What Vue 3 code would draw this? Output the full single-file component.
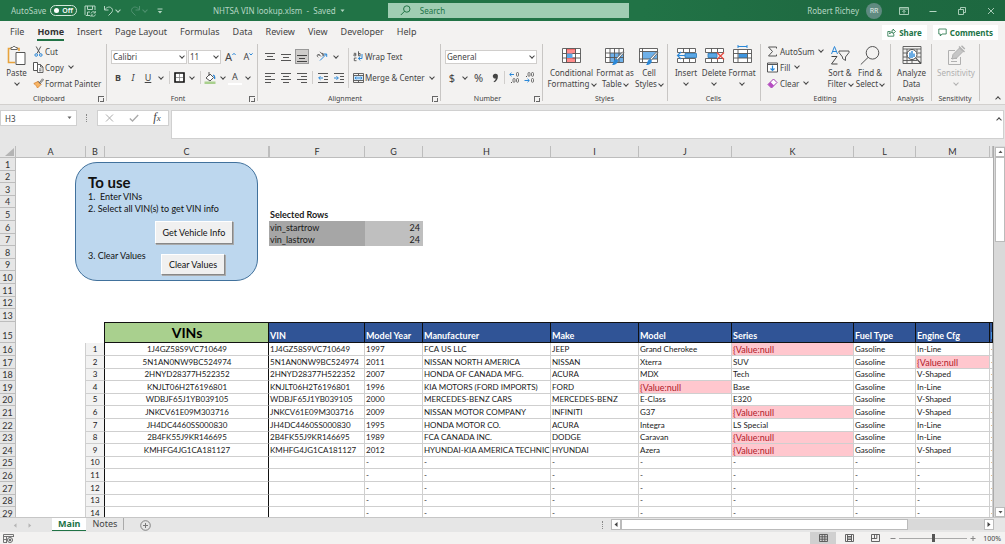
<script setup>
import { ref } from 'vue';

const tabs = ['File', 'Home', 'Insert', 'Page Layout', 'Formulas', 'Data', 'Review', 'View', 'Developer', 'Help'];
const activeTab = ref('Home');
const autoSave = ref(false);
const search = ref('');
const cellName = ref('H3');
const formula = ref('');
const fontName = ref('Calibri');
const fontSize = ref('11');
const numberFormat = ref('General');
const zoom = ref(100);
const sheet = ref('Main');

const columns = ['A', 'B', 'C', 'F', 'G', 'H', 'I', 'J', 'K', 'L', 'M', ''];
const fields = ['VIN', 'Model Year', 'Manufacturer', 'Make', 'Model', 'Series', 'Fuel Type', 'Engine Cfg', 'I'];
const NULL = '{Value:null';

const topRows = Array.from({ length: 13 }, (_, i) => i + 1);
const selected = {
    5: ['Selected Rows', ''],
    6: ['vin_startrow', '24'],
    7: ['vin_lastrow', '24'],
};

const vehicles = [
    ['1J4GZ58S9VC710649', '1997', 'FCA US LLC', 'JEEP', 'Grand Cherokee', NULL, 'Gasoline', 'In-Line', '-'],
    ['5N1AN0NW9BC524974', '2011', 'NISSAN NORTH AMERICA', 'NISSAN', 'Xterra', 'SUV', 'Gasoline', NULL, '-'],
    ['2HNYD28377H522352', '2007', 'HONDA OF CANADA MFG.', 'ACURA', 'MDX', 'Tech', 'Gasoline', 'V-Shaped', '-'],
    ['KNJLT06H2T6196801', '1996', 'KIA MOTORS (FORD IMPORTS)', 'FORD', NULL, 'Base', 'Gasoline', 'In-Line', '-'],
    ['WDBJF65J1YB039105', '2000', 'MERCEDES-BENZ CARS', 'MERCEDES-BENZ', 'E-Class', 'E320', 'Gasoline', 'V-Shaped', '-'],
    ['JNKCV61E09M303716', '2009', 'NISSAN MOTOR COMPANY', 'INFINITI', 'G37', NULL, 'Gasoline', 'V-Shaped', '-'],
    ['JH4DC4460SS000830', '1995', 'HONDA MOTOR CO.', 'ACURA', 'Integra', 'LS Special', 'Gasoline', 'In-Line', '-'],
    ['2B4FK55J9KR146695', '1989', 'FCA CANADA INC.', 'DODGE', 'Caravan', NULL, 'Gasoline', 'In-Line', '-'],
    ['KMHFG4JG1CA181127', '2012', 'HYUNDAI-KIA AMERICA TECHNIC', 'HYUNDAI', 'Azera', NULL, 'Gasoline', 'V-Shaped', '-'],
];
const emptyRow = ['', '-', '-', '-', '-', '-', '-', '-', '-'];
const dataRows = Array.from({ length: 14 }, (_, i) => vehicles[i] || emptyRow);
</script>

<template>
    <div class="excel">
        <header class="title-bar">
            <div class="title-left">
                <label class="autosave">
                    <span>AutoSave</span>
                    <input type="checkbox" class="sr" v-model="autoSave">
                    <span class="switch"><i></i><b>{{ autoSave ? 'On' : 'Off' }}</b></span>
                </label>
                <button class="quick" aria-label="Save">
                    <svg width="12" height="12" viewBox="0 0 12 12" fill="none" stroke="currentColor">
                        <path d="M6 10.500H2L1 9.500V1h10v4M3.500 1v3.500h5V1M3.500 10.500V7H6" />
                        <path d="M7 8.500a2.300 2.300 0 0 1 4-1M11.300 6v2H9.500M11.500 9.500a2.300 2.300 0 0 1-4 1M7 12v-2h2" stroke-width=".9" />
                    </svg>
                </button>
                <button class="quick" aria-label="Undo">
                    <svg width="11" height="11" viewBox="0 0 11 11" fill="none" stroke="currentColor">
                        <path d="M1.500 1v4h4M1.500 5C4 1.500 7 1.500 8.500 3s1.300 3.500-.5 5L5.500 10.500" />
                    </svg>
                    <i class="chev"></i>
                </button>
                <button class="quick dim" aria-label="Redo">
                    <svg width="11" height="11" viewBox="0 0 11 11" fill="none" stroke="currentColor">
                        <path d="M9.500 1v4h-4M9.500 5C7 1.500 4 1.500 2.500 3S1.200 6.500 3 8l2.500 2.500" />
                    </svg>
                    <i class="chev"></i>
                </button>
                <button class="quick" aria-label="Customize Quick Access Toolbar">
                    <svg width="6" height="6" viewBox="0 0 6 6"><path d="M.5 1h5" stroke="currentColor" /><path d="M.8 3h4.400L3 5.400z" fill="currentColor" /></svg>
                </button>
            </div>
            <button class="doc-name">NHTSA VIN lookup.xlsm &nbsp;-&nbsp; Saved &nbsp;<svg width="5" height="4" viewBox="0 0 5 4"><path d="M.5.5h4L2.500 3z" fill="currentColor" /></svg></button>
            <label class="search">
                <svg width="11" height="11" viewBox="0 0 11 11" fill="none" stroke="#217346"><circle cx="6.800" cy="4" r="3.200" /><path d="M4.500 6.300.8 10" /></svg>
                <input v-model="search" placeholder="Search" aria-label="Search">
            </label>
            <div class="title-right">
                <span>Robert Richey</span>
                <span class="avatar">RR</span>
                <button class="win" aria-label="Ribbon Display Options">
                    <svg width="10" height="8" viewBox="0 0 10 8" fill="none" stroke="currentColor"><path d="M.5.5h9v7h-9zM.5 2h9M5 6.500v-3M3.500 4.800 5 3.300l1.500 1.500" stroke-width=".9" /></svg>
                </button>
                <button class="win" aria-label="Minimize"><svg width="8" height="8" viewBox="0 0 8 8" stroke="currentColor"><path d="M.5 4.500h7" /></svg></button>
                <button class="win" aria-label="Restore"><svg width="8" height="8" viewBox="0 0 8 8" fill="none" stroke="currentColor"><path d="M.5 2.500h5v5h-5zM2.500 2.500v-2h5v5h-2" stroke-width=".9" /></svg></button>
                <button class="win" aria-label="Close"><svg width="8" height="8" viewBox="0 0 8 8" stroke="currentColor"><path d="M1 1l6 6M7 1 1 7" stroke-width=".9" /></svg></button>
            </div>
        </header>

        <nav class="tabs">
            <button v-for="tab in tabs" :key="tab" class="tab" :class="{ active: tab === activeTab }" @click="activeTab = tab">{{ tab }}</button>
            <span class="spacer"></span>
            <button class="action">
                <svg width="9" height="9" viewBox="0 0 9 9" fill="none" stroke="#217346"><path d="M3 3.500H.8v4.700h6V6M2.500 6c.2-2 1.500-3.200 3.500-3.200V1l2.500 2.500L6 5.800V4.300C4.500 4.300 3.300 4.800 2.500 6z" stroke-width=".8" /></svg>
                Share
            </button>
            <button class="action">
                <svg width="9" height="9" viewBox="0 0 9 9" fill="none" stroke="#217346"><path d="M.8 1h7.400v5H4L2.300 8V6H.8z" stroke-width=".8" /></svg>
                Comments
            </button>
        </nav>

        <section class="ribbon">
            <div class="group g-clipboard">
                <div class="body">
                    <button class="big paste">
                        <svg width="19" height="21" viewBox="0 0 19 21" fill="none">
                            <path d="M12 6V3.500H1.500v14H8" stroke="#e8a33d" stroke-width="1.600" />
                            <path d="M4 4.500V2.500h1.500a1.700 1.700 0 0 1 3.200 0h1.500v2z" fill="#fff" stroke="#666" />
                            <path d="M9 7.500h9v12H9z" fill="#fff" stroke="#555" />
                        </svg>
                        <span>Paste</span><i class="chev"></i>
                    </button>
                    <div class="stack">
                        <button>
                            <svg width="11" height="11" viewBox="0 0 11 11" fill="none"><path d="M3.200.5 7 7.500M7.800.5 4 7.500" stroke="#555" /><circle cx="3.200" cy="9" r="1.300" stroke="#2b88d8" /><circle cx="7.800" cy="9" r="1.300" stroke="#2b88d8" /></svg>
                            Cut
                        </button>
                        <button>
                            <svg width="11" height="11" viewBox="0 0 11 11" fill="#fff" stroke="#555"><path d="M.5.5h4v8h-4z" /><path d="M4.500 2.500h3l2.500 2.500v5.500H4.500zM7.500 2.500V5H10M6 7h2.500M6 8.800h2.500" stroke-width=".9" /></svg>
                            Copy <i class="chev far"></i>
                        </button>
                        <button>
                            <svg width="11" height="11" viewBox="0 0 11 11"><path d="M.8 5.500 5 3.500l3 3L4.500 10C3.500 8 2.500 6.500.8 5.500z" fill="#f7b565" stroke="#d9822b" stroke-width=".8" /><path d="M5 3.200 8 6.200M6.500 4.500 9.500.8l1 1L7.300 5.300" fill="#fff" stroke="#555" stroke-width=".9" /></svg>
                            Format Painter
                        </button>
                    </div>
                </div>
                <footer><span>Clipboard</span><i class="launcher"></i></footer>
            </div>

            <div class="group g-font">
                <div class="body rows">
                    <div class="row">
                        <span class="combo c-font"><select v-model="fontName" aria-label="Font"><option>Calibri</option></select><i class="chev"></i></span>
                        <span class="combo c-size"><select v-model="fontSize" aria-label="Font size"><option>11</option></select><i class="chev"></i></span>
                        <button class="tool wide" aria-label="Increase Font Size"><span class="glyph">A</span><svg width="4" height="10" viewBox="0 0 4 10" fill="none" stroke="#2b88d8"><path d="M.4 3 2 1.300 3.600 3" /></svg></button>
                        <button class="tool wide" aria-label="Decrease Font Size"><span class="glyph small">A</span><svg width="4" height="10" viewBox="0 0 4 10" fill="none" stroke="#2b88d8"><path d="M.4 1.300 2 3l1.600-1.700" /></svg></button>
                    </div>
                    <div class="row">
                        <button class="tool" aria-label="Bold"><b>B</b></button>
                        <button class="tool" aria-label="Italic"><em>I</em></button>
                        <button class="tool" aria-label="Underline"><u>U</u></button>
                        <i class="chev"></i>
                        <span class="sep"></span>
                        <button class="tool" aria-label="Borders"><svg width="11" height="11" viewBox="0 0 11 11" fill="#fff"><path d="M1 1h9v9H1z" stroke="#111" stroke-width="1.600" /><path d="M5.500 2v7M2 5.500h7" stroke="#888" stroke-width=".8" /></svg></button>
                        <i class="chev"></i>
                        <span class="sep"></span>
                        <button class="tool" aria-label="Fill Color"><svg width="12" height="12" viewBox="0 0 12 12" fill="none"><path d="M2 6l4-4 3.500 3.500L6 9z" fill="#fff" stroke="#555" /><path d="M5 0v4" stroke="#555" /><path d="M9 3c1.500.5 2 2 1.500 4" stroke="#2b88d8" stroke-width="1.300" /><path d="M.5 9.500h11V12H.5z" fill="#a9d08e" /></svg></button>
                        <i class="chev"></i>
                        <button class="tool font-color" aria-label="Font Color">A</button>
                        <i class="chev"></i>
                    </div>
                </div>
                <footer><span>Font</span><i class="launcher"></i></footer>
            </div>

            <div class="group g-align">
                <div class="body">
                    <div class="rows">
                        <div class="row">
                            <button class="tool" aria-label="Top Align"><svg width="10" height="10" viewBox="0 0 10 10" stroke="#555"><path d="M0 1.500h10M2 4.500h6M0 7.500h10" /></svg></button>
                            <button class="tool" aria-label="Middle Align"><svg width="10" height="10" viewBox="0 0 10 10" stroke="#555"><path d="M0 2.500h10M2 5.500h6M0 8.500h10" /></svg></button>
                            <button class="tool on" aria-label="Bottom Align"><svg width="10" height="10" viewBox="0 0 10 10" stroke="#444"><path d="M0 3.500h10M2 6.500h6M0 9.500h10" /></svg></button>
                            <button class="tool orient" aria-label="Orientation"><svg width="12" height="11" viewBox="0 0 12 11" fill="none"><path d="M4 9.500 10.500 3M7.800 3h2.900v2.900" stroke="#2b88d8" /><path d="M1 4.500 2.500 3 5 5.500M3.800 4.300a1.300 1.300 0 1 0-1.600 2M4 .8l3.500 3.500M5.800 2.600a1.200 1.200 0 1 1 .5 2.200" stroke="#555" stroke-width=".9" /></svg></button>
                            <i class="chev"></i>
                        </div>
                        <div class="row">
                            <button class="tool" aria-label="Align Left"><svg width="10" height="10" viewBox="0 0 10 10" stroke="#555"><path d="M0 .5h10M0 3.500h6M0 6.500h10M0 9.500h6" /></svg></button>
                            <button class="tool" aria-label="Center"><svg width="10" height="10" viewBox="0 0 10 10" stroke="#555"><path d="M0 .5h10M2 3.500h6M0 6.500h10M2 9.500h6" /></svg></button>
                            <button class="tool" aria-label="Align Right"><svg width="10" height="10" viewBox="0 0 10 10" stroke="#555"><path d="M0 .5h10M4 3.500h6M0 6.500h10M4 9.500h6" /></svg></button>
                            <span class="sep snug"></span>
                            <button class="tool" aria-label="Decrease Indent"><svg width="10" height="10" viewBox="0 0 10 10" fill="none"><path d="M0 .5h10M6 3.500h4M6 6.500h4M0 9.500h10" stroke="#555" /><path d="M5 5H.8M2.500 3.200.7 5l1.800 1.800" stroke="#2b88d8" /></svg></button>
                            <button class="tool" aria-label="Increase Indent"><svg width="10" height="10" viewBox="0 0 10 10" fill="none"><path d="M0 .5h10M6 3.500h4M6 6.500h4M0 9.500h10" stroke="#555" /><path d="M0 5h4.200M2.500 3.200 4.300 5 2.500 6.800" stroke="#2b88d8" /></svg></button>
                        </div>
                    </div>
                    <span class="tall-sep"></span>
                    <div class="rows">
                        <button class="row text-tool"><svg width="11" height="11" viewBox="0 0 11 11" fill="none"><path d="M.8 2.300h2v2.500H1.400a.7.700 0 0 1 0-1.400h1.400M5.500.3v4.500M5.500 2.500h1.600v2.300H5.500M3.500 7H1.300v2.700h2.200" stroke="#555" stroke-width=".9" /><path d="M9 3v4.500H5.500M7.300 5.600 5.300 7.500l2 1.900" stroke="#2b88d8" /></svg>Wrap Text</button>
                        <button class="row text-tool"><svg width="11" height="10" viewBox="0 0 11 10" fill="none"><path d="M.5.5h10v9H.5zM.5 2.500h10M.5 7.500h10M5.500.5v2M5.500 7.500v2" stroke="#555" stroke-width=".9" /><path d="M1 3h9v4H1z" fill="#cce4f7" /><path d="M2 5h7M3.300 3.700 2 5l1.300 1.300M7.700 3.700 9 5 7.700 6.300" stroke="#2b88d8" stroke-width=".9" /></svg>Merge &amp; Center <i class="chev far"></i></button>
                    </div>
                </div>
                <footer><span>Alignment</span><i class="launcher"></i></footer>
            </div>

            <div class="group g-number">
                <div class="body rows">
                    <div class="row"><span class="combo c-number"><select v-model="numberFormat" aria-label="Number Format"><option>General</option></select><i class="chev"></i></span></div>
                    <div class="row">
                        <button class="tool" aria-label="Accounting Number Format"><span class="glyph">$</span></button>
                        <i class="chev"></i>
                        <button class="tool wide" aria-label="Percent Style"><span class="glyph">%</span></button>
                        <button class="tool" aria-label="Comma Style"><svg width="7" height="10" viewBox="0 0 7 10"><path d="M3.500.8a2.400 2.400 0 0 1 2.400 2.600C5.900 6 4.500 8.300 2 9.200l-.4-.8C3 7.600 3.700 6.700 3.800 5.500A2.400 2.400 0 1 1 3.500.8z" fill="#444" /></svg></button>
                        <span class="sep snug"></span>
                        <button class="tool" aria-label="Increase Decimal"><svg width="11" height="11" viewBox="0 0 11 11" fill="none"><path d="M5 2.500H.8M2.500.8.7 2.500l1.800 1.700" stroke="#2b88d8" /><rect x="7.500" y=".5" width="2" height="3.800" rx="1" stroke="#555" stroke-width=".8" /><rect x="4" y="6.500" width="2" height="3.800" rx="1" stroke="#555" stroke-width=".8" /><rect x="7.500" y="6.500" width="2" height="3.800" rx="1" stroke="#555" stroke-width=".8" /><path d="M2 10.500h1" stroke="#555" /></svg></button>
                        <button class="tool" aria-label="Decrease Decimal"><svg width="11" height="11" viewBox="0 0 11 11" fill="none"><path d="M.5 8.500h4.700M3.500 6.800l1.800 1.700-1.800 1.700" stroke="#2b88d8" /><rect x="4" y=".5" width="2" height="3.800" rx="1" stroke="#555" stroke-width=".8" /><rect x="7.500" y=".5" width="2" height="3.800" rx="1" stroke="#555" stroke-width=".8" /><rect x="7.500" y="6.500" width="2" height="3.800" rx="1" stroke="#555" stroke-width=".8" /><path d="M2 4.500h1" stroke="#555" /></svg></button>
                    </div>
                </div>
                <footer><span>Number</span><i class="launcher"></i></footer>
            </div>

            <div class="group g-styles">
                <div class="body">
                    <button class="big w-cond">
                        <svg width="19" height="21" viewBox="0 0 19 21" fill="none">
                            <path d="M.5 3.500h18v14H.5z" fill="#fff" />
                            <path d="M4.500 4h9v4.500h-9zM4.500 13h9v4.500h-9z" fill="#ff8c8c" stroke="#e03c3c" stroke-width=".8" />
                            <path d="M4.500 8.500h6V13h-6z" fill="#5aa7e6" />
                            <path d="M.5 3.500h18v14H.5zM.5 8.500h4M.5 13h4M10.500 8.500h8M10.500 13h8M4.500 3.500v14M13.500 3.500v14" stroke="#555" stroke-width=".9" />
                        </svg>
                        <span>Conditional</span><span>Formatting <i class="chev"></i></span>
                    </button>
                    <button class="big w-table">
                        <svg width="20" height="21" viewBox="0 0 20 21" fill="none">
                            <path d="M.5 3.500h18v14H.5z" fill="#fff" />
                            <path d="M5 8h13.500v9.500H5z" fill="#6fb1ea" />
                            <path d="M.5 3.500h18v14H.5zM.5 8h18M.5 12.500h18M5 3.500v14M9.500 3.500v14M14 3.500v14" stroke="#555" stroke-width=".9" />
                            <path d="M19 7.500 12.500 15l-1.500-1.200L17.500 7z" fill="#fff" stroke="#555" stroke-width=".8" />
                            <path d="M11 14l1.800 1.500c0 2.500-1.800 4.500-5.800 4.500 1.500-1 1-5 4-6z" fill="#2b88d8" />
                        </svg>
                        <span>Format as</span><span>Table <i class="chev"></i></span>
                    </button>
                    <button class="big w-cell">
                        <svg width="20" height="21" viewBox="0 0 20 21" fill="none">
                            <path d="M.5 3.500h18v14H.5z" fill="#fff" />
                            <path d="M3.500 6.500h15V14h-15z" fill="#6fb1ea" />
                            <path d="M.5 3.500h18v14H.5zM.5 6.500h18M.5 14h18M3.500 3.500v14" stroke="#555" stroke-width=".9" />
                            <path d="M19 7.500 12.500 15l-1.500-1.200L17.500 7z" fill="#fff" stroke="#555" stroke-width=".8" />
                            <path d="M11 14l1.800 1.500c0 2.500-1.800 4.500-5.800 4.500 1.500-1 1-5 4-6z" fill="#2b88d8" />
                        </svg>
                        <span>Cell</span><span>Styles <i class="chev"></i></span>
                    </button>
                </div>
                <footer><span>Styles</span></footer>
            </div>

            <div class="group g-cells">
                <div class="body">
                    <button class="big w-cells">
                        <svg width="21" height="21" viewBox="0 0 21 21" fill="none">
                            <path d="M1.500 3.500h18v4h-18zM1.500 13.500h18v4h-18zM7.500 3.500v4M13.500 3.500v4M7.500 13.500v4M13.500 13.500v4" fill="#fff" stroke="#555" stroke-width=".9" />
                            <path d="M9 8.500h11.500v4H9z" fill="#5aa7e6" stroke="#2b78b8" stroke-width=".8" />
                            <path d="M9 10.500H1.500M5 7l-3.500 3.500L5 14" stroke="#2b88d8" stroke-width="1.200" />
                        </svg>
                        <span>Insert</span><i class="chev"></i>
                    </button>
                    <button class="big w-cells">
                        <svg width="21" height="21" viewBox="0 0 21 21" fill="none">
                            <path d="M1.500 3.500h18v4h-18zM1.500 13.500h18v4h-18zM7.500 3.500v4M13.500 3.500v4M7.500 13.500v4M13.500 13.500v4" fill="#fff" stroke="#555" stroke-width=".9" />
                            <path d="M4 8.500h9v4H4z" fill="#5aa7e6" stroke="#2b78b8" stroke-width=".8" />
                            <path d="M13 7.500l7 7M20 7.500l-7 7" stroke="#e8483f" stroke-width="1.200" />
                        </svg>
                        <span>Delete</span><i class="chev"></i>
                    </button>
                    <button class="big w-cells">
                        <svg width="21" height="21" viewBox="0 0 21 21" fill="none">
                            <path d="M1.500 4.500h18v13h-18z" fill="#fff" />
                            <path d="M6.500 8.500h9V13h-9z" fill="#3d95e0" />
                            <path d="M1.500 4.500h18v13h-18zM1.500 8.500h18M1.500 13h18M6 4.500v13M15.500 4.500v13" stroke="#555" stroke-width=".9" />
                            <path d="M6 1.500h9M6 0v3M15 0v3" stroke="#2b88d8" />
                        </svg>
                        <span>Format</span><i class="chev"></i>
                    </button>
                </div>
                <footer><span>Cells</span></footer>
            </div>

            <div class="group g-editing">
                <div class="body">
                    <div class="stack edit">
                        <button><svg width="11" height="11" viewBox="0 0 11 11" fill="none" stroke="#555"><path d="M9.500 2.500V1h-8l4 4.500-4 4.500h8V8.500" /></svg>AutoSum <i class="chev"></i></button>
                        <button><svg width="11" height="11" viewBox="0 0 11 11" fill="none"><path d="M.5 1h10v9H.5z" fill="#fff" stroke="#555" /><path d="M.5 2.500h10" stroke="#555" /><path d="M5.500 3.500v5M3.500 6.500l2 2 2-2" stroke="#2b88d8" stroke-width="1.200" /></svg>Fill <i class="chev"></i></button>
                        <button><svg width="11" height="11" viewBox="0 0 11 11" fill="none"><path d="M1 6.500 6.500 1 10 4.500 4.500 10z" fill="#fff" stroke="#a33db0" /><path d="M1 6.500l2.500-2.500L7 7.500 4.500 10z" fill="#b54bc2" /></svg>Clear <i class="chev"></i></button>
                    </div>
                    <button class="big w-edit">
                        <svg width="20" height="21" viewBox="0 0 20 21" fill="none">
                            <path d="M1.500 9 4.500 1.500 7.500 9M2.600 6.500h3.800" stroke="#2b88d8" />
                            <path d="M1.500 11.500h5.500L1.500 19h6" stroke="#444" />
                            <path d="M9 6h10v1.500L15.500 12v3.500l-3-2V12L9 7.500z" stroke="#555" />
                        </svg>
                        <span>Sort &amp;</span><span>Filter <i class="chev"></i></span>
                    </button>
                    <button class="big w-edit">
                        <svg width="20" height="21" viewBox="0 0 20 21" fill="none" stroke="#555"><circle cx="12.500" cy="7.800" r="6.300" /><path d="M8 12.500.8 19.500" /></svg>
                        <span>Find &amp;</span><span>Select <i class="chev"></i></span>
                    </button>
                </div>
                <footer><span>Editing</span></footer>
            </div>

            <div class="group g-analysis">
                <div class="body">
                    <button class="big">
                        <svg width="20" height="21" viewBox="0 0 20 21" fill="none">
                            <path d="M1 1.500h18v17H1zM1 4h18M1 8h4M15 8h4M1 12h4M15 12h4M1 15.500h14M5 4v14M10 15v3.500M15 4v3" stroke="#555" stroke-width=".9" />
                            <circle cx="10" cy="9.500" r="5" fill="#fff" stroke="#444" />
                            <path d="M8 7.500V13M10 6v7M12 8.500V12" stroke="#2b88d8" stroke-width="1.400" />
                            <path d="M13.800 13.200 19 18.500" stroke="#444" stroke-width="1.200" />
                        </svg>
                        <span>Analyze</span><span>Data</span>
                    </button>
                </div>
                <footer><span>Analysis</span></footer>
            </div>

            <div class="group g-sens">
                <div class="body">
                    <button class="big" disabled>
                        <svg width="20" height="21" viewBox="0 0 20 21" fill="none" stroke="#b0b0b0">
                            <path d="M9 5.500H2.500v14h12V12M5 13.500h6M5 16.500h6" />
                            <path d="M7 9.500 13.500 3l3.500 3.500L10.500 13 6 14z" fill="#c6c6c6" />
                            <path d="M13 1.500 18.500 7M15.500.8l3.300 3.300" stroke-width="1.400" />
                        </svg>
                        <span>Sensitivity</span><i class="chev"></i>
                    </button>
                </div>
                <footer><span>Sensitivity</span></footer>
            </div>
            <button class="collapse" aria-label="Collapse the Ribbon"><i class="chev up"></i></button>
        </section>

        <section class="formula-bar">
            <span class="name-box">
                <input v-model="cellName" aria-label="Name Box">
                <svg width="5" height="4" viewBox="0 0 5 4"><path d="M.5.5h4L2.500 3z" fill="#666" /></svg>
            </span>
            <span class="dots"></span>
            <div class="fx">
                <button aria-label="Cancel"><svg width="9" height="8" viewBox="0 0 9 8" stroke="#aaa"><path d="M1 .5l7 7M8 .5l-7 7" /></svg></button>
                <button aria-label="Enter"><svg width="10" height="8" viewBox="0 0 10 8" fill="none" stroke="#aaa" stroke-width="1.300"><path d="M.8 4.500 3.500 7 9.200 1" /></svg></button>
                <button class="fn" aria-label="Insert Function"><em>f<small>x</small></em></button>
            </div>
            <div class="formula">
                <input v-model="formula" aria-label="Formula Bar">
                <button aria-label="Collapse Formula Bar"><i class="chev up"></i></button>
            </div>
        </section>

        <main class="work">
            <div class="sheet">
                <table>
                    <colgroup>
                        <col class="k-head"><col class="k-a"><col class="k-b"><col class="k-c"><col class="k-f"><col class="k-g">
                        <col class="k-h"><col class="k-i"><col class="k-j"><col class="k-k"><col class="k-l"><col class="k-m"><col>
                    </colgroup>
                    <thead>
                        <tr>
                            <th class="corner"><svg width="9" height="8" viewBox="0 0 9 8"><path d="M9 0v8H0z" fill="#b4b4b4" /></svg></th>
                            <th v-for="(c, i) in columns" :key="i" :class="{ after: c === 'F' }">{{ c }}</th>
                        </tr>
                    </thead>
                    <tbody>
                        <tr v-for="n in topRows" :key="n">
                            <th>{{ n }}</th>
                            <td></td><td></td><td></td>
                            <template v-if="selected[n]">
                                <td :class="n === 5 ? 'strong' : 'gray'">{{ selected[n][0] }}</td>
                                <td :class="{ silver: n > 5 }">{{ selected[n][1] }}</td>
                            </template>
                            <template v-else><td></td><td></td></template>
                            <td v-for="i in 7" :key="i"></td>
                        </tr>
                        <tr class="fields">
                            <th>15</th>
                            <td></td><td class="before"></td>
                            <td class="vins">VINs</td>
                            <td v-for="f in fields" :key="f" class="field">{{ f }}</td>
                        </tr>
                        <tr v-for="(row, r) in dataRows" :key="r" class="data">
                            <th>{{ r + 16 }}</th>
                            <td class="blank"></td>
                            <td class="num">{{ r + 1 }}</td>
                            <td class="vin">{{ row[0] }}</td>
                            <td v-for="(v, i) in row" :key="i" :class="{ bad: v === NULL }">{{ v }}</td>
                        </tr>
                    </tbody>
                </table>

                <div class="card">
                    <h2>To use</h2>
                    <p>1.&nbsp; Enter VINs</p>
                    <p>2. Select all VIN(s) to get VIN info</p>
                    <button class="get">Get Vehicle Info</button>
                    <div class="clear-row">
                        <p>3. Clear Values</p>
                        <button class="clear">Clear Values</button>
                    </div>
                </div>
            </div>
            <div class="vscroll">
                <button aria-label="Scroll up"><svg width="5" height="4" viewBox="0 0 5 4"><path d="M.5 3h4L2.500.5z" fill="#555" /></svg></button>
                <span class="thumb"></span>
                <button class="end" aria-label="Scroll down"><svg width="5" height="4" viewBox="0 0 5 4"><path d="M.5 1h4L2.500 3.500z" fill="#555" /></svg></button>
            </div>
        </main>

        <div class="sheet-tabs">
            <div class="sheets">
                <button class="arrow" aria-label="Previous sheet"><svg width="4" height="5" viewBox="0 0 4 5"><path d="M3.500.3v4.400L.8 2.500z" fill="#b5b5b5" /></svg></button>
                <button class="arrow" aria-label="Next sheet"><svg width="4" height="5" viewBox="0 0 4 5"><path d="M.5.3v4.400l2.700-2.200z" fill="#b5b5b5" /></svg></button>
                <button v-for="s in ['Main', 'Notes']" :key="s" class="sheet-tab" :class="{ current: s === sheet }" @click="sheet = s">{{ s }}</button>
                <button class="add" aria-label="New sheet"><svg width="11" height="11" viewBox="0 0 11 11" fill="none" stroke="#777"><circle cx="5.500" cy="5.500" r="4.800" stroke-width=".9" /><path d="M5.500 3v5M3 5.500h5" /></svg></button>
            </div>
            <span class="dots"></span>
            <div class="hscroll">
                <button aria-label="Scroll left"><svg width="4" height="5" viewBox="0 0 4 5"><path d="M3.500 0v5L.5 2.500z" fill="#444" /></svg></button>
                <span class="thumb"></span>
                <button class="end" aria-label="Scroll right"><svg width="4" height="5" viewBox="0 0 4 5"><path d="M.5 0v5l3-2.500z" fill="#444" /></svg></button>
            </div>
        </div>

        <footer class="status">
            <button aria-label="Record Macro"><svg width="11" height="9" viewBox="0 0 11 9" fill="none" stroke="#666"><path d="M10.500 3V.5H.5v8H4M.5 2.500h10M3.500 2.500v6M.5 5.500h3" stroke-width=".9" /><circle cx="7" cy="6" r="2.500" fill="#fff" /><circle cx="7" cy="6" r=".9" fill="#444" /></svg></button>
            <span class="spacer"></span>
            <button class="view on" aria-label="Normal"><svg width="9" height="8" viewBox="0 0 9 8" fill="none" stroke="#555"><path d="M.5.5h8v7h-8zM.5 2.800h8M.5 5.200h8M3.200.5v7M5.800.5v7" stroke-width=".9" /></svg></button>
            <button class="view" aria-label="Page Layout"><svg width="9" height="8" viewBox="0 0 9 8" fill="none" stroke="#555"><path d="M.5.5h8v7h-8zM2.500 1v6M6.500 1v6M2.500 2.500h4M2.500 4h4M2.500 5.500h4" stroke-width=".9" /></svg></button>
            <button class="view" aria-label="Page Break Preview"><svg width="9" height="8" viewBox="0 0 9 8" fill="none" stroke="#555"><path d="M.5.5h8v7h-8zM3.500.5v4M5.800.5v4M.5 4.500h5.300" stroke-width=".9" /></svg></button>
            <button class="step" aria-label="Zoom out"><svg width="6" height="7" viewBox="0 0 6 7" stroke="#888"><path d="M.5 3.500h5" /></svg></button>
            <input type="range" min="10" max="190" v-model="zoom" aria-label="Zoom">
            <button class="step" aria-label="Zoom in"><svg width="6" height="7" viewBox="0 0 6 7" stroke="#888"><path d="M.5 3.500h5M3 1v5" /></svg></button>
            <span class="percent">{{ zoom }}%</span>
        </footer>
    </div>
</template>

<style>
body {
    margin: 0;
}
</style>

<style scoped>
.excel {
    display: flex;
    flex-direction: column;
    height: 100vh;
    overflow: hidden;
    background: #e6e6e6;
    color: #444;
    font-family: "Noto Sans", "Open Sans", sans-serif;
    font-size: 8px;
    line-height: 11px;
}

.excel * {
    box-sizing: border-box;
}

button,
input,
select {
    margin: 0;
    padding: 0;
    border: 0;
    background: none;
    color: inherit;
    font: inherit;
    outline: none;
}

button {
    display: flex;
    align-items: center;
    justify-content: center;
    white-space: nowrap;
}

svg {
    display: block;
    flex: none;
}

.spacer {
    flex: 1;
}

.sr {
    position: absolute;
    opacity: 0;
}

/* small drop-down arrow */
.chev {
    display: inline-block;
    flex: none;
    width: 9px;
    text-align: center;
    line-height: 0;
}

.chev::before {
    content: "";
    display: inline-block;
    width: 3px;
    height: 3px;
    border: solid currentColor;
    border-width: 0 1px 1px 0;
    transform: translateY(-1px) rotate(45deg);
}

.chev.up::before {
    transform: translateY(1px) rotate(225deg);
}

/* title bar */
.title-bar {
    display: flex;
    align-items: center;
    flex: none;
    height: 21px;
    background: linear-gradient(90deg, #217346 64%, #1f6b42 80%, #1d6840);
    color: #b5d6c3;
}

.title-left {
    display: flex;
    align-items: center;
    flex: 0 1 213px;
    gap: 7px;
    padding-left: 11px;
}

.autosave {
    display: flex;
    align-items: center;
    gap: 4px;
}

.switch {
    display: flex;
    align-items: center;
    gap: 3px;
    height: 11px;
    padding: 0 3px;
    border: 1px solid #d5e8dc;
    border-radius: 6px;
    color: #fff;
    font-size: 7px;
}

.switch b {
    font-weight: 600;
}

.switch i {
    width: 5px;
    height: 5px;
    border-radius: 50%;
    background: #fff;
}

.quick {
    gap: 0;
}

.dim {
    color: #4f9170;
}

.search {
    display: flex;
    align-items: center;
    gap: 9px;
    flex: 0 1 241px;
    height: 15px;
    margin-left: 43px;
    padding-left: 12px;
    background: #a0cdb3;
}

.search input {
    flex: 1;
    min-width: 0;
    color: #217346;
}

.search input::placeholder {
    color: #217346;
    opacity: 1;
}

.title-right {
    display: flex;
    align-items: center;
    flex: 1;
    justify-content: flex-end;
}

.avatar {
    width: 16px;
    height: 16px;
    margin: 0 7px;
    border-radius: 50%;
    background: #5f8a80;
    color: #e0ece6;
    font-size: 7px;
    line-height: 16px;
    text-align: center;
}

.win {
    width: 29px;
    height: 21px;
}

/* ribbon tabs */
.tabs {
    display: flex;
    align-items: center;
    flex: none;
    gap: 13px;
    height: 22px;
    padding: 0 7px 0 10px;
    background: #f3f2f1;
    font-size: 9px;
}

.tab {
    height: 18px;
    border-bottom: 2px solid transparent;
}

.tab.active {
    border-color: #217346;
    color: #333;
    font-weight: 700;
}

.action {
    gap: 3px;
    height: 15px;
    padding: 0 5px;
    background: #fff;
    color: #217346;
    font-weight: 700;
    font-size: 8px;
}

.action + .action {
    margin-left: -7px;
}

/* ribbon */
.ribbon {
    display: flex;
    flex: none;
    height: 62px;
    border-bottom: 1px solid #d2d0ce;
    background: #f3f2f1;
}

.group {
    display: flex;
    flex-direction: column;
    flex: none;
    position: relative;
}

.group::after {
    content: "";
    position: absolute;
    top: 1px;
    right: 0;
    bottom: 3px;
    width: 1px;
    background: #c8c6c4;
}

.group .body {
    display: flex;
    height: 50px;
}

.group footer {
    display: flex;
    align-items: center;
    height: 11px;
    padding-right: 2px;
    font-size: 7px;
}

.group footer span {
    flex: 1;
    text-align: center;
}

.launcher {
    position: relative;
    width: 6px;
    height: 6px;
    margin-right: 1px;
    border: solid #666;
    border-width: 1px 0 0 1px;
}

.launcher::after {
    content: "";
    position: absolute;
    right: 0;
    bottom: 0;
    width: 3px;
    height: 3px;
    border: solid #666;
    border-width: 0 1px 1px 0;
}

.g-clipboard { width: 107px; }
.g-font { width: 151px; }
.g-align { width: 183px; }
.g-number { width: 102px; }
.g-styles { width: 125px; }
.g-cells { width: 93px; }
.g-editing { width: 130px; }
.g-analysis { width: 41px; }
.g-sens { width: 48px; }

.big {
    flex-direction: column;
    justify-content: flex-start;
    padding-top: 2px;
}

.big > span {
    line-height: 11px;
}

.big > svg + span {
    margin-top: 1px;
}

.big > .chev {
    margin-top: 4px;
}

.big span .chev {
    width: 4px;
    vertical-align: middle;
}

.big:disabled {
    color: #b0b0b0;
}

.g-analysis .big,
.g-sens .big {
    width: 100%;
}

.paste { width: 33px; }
.g-styles .body { padding-left: 4px; }
.w-cond { width: 49px; }
.w-table { width: 38px; }
.w-cell { width: 30px; }
.g-cells .body { padding-left: 4px; }
.w-cells { width: 28px; }
.w-edit { width: 30px; }

.stack {
    display: flex;
    flex-direction: column;
    align-items: flex-start;
}

.stack button {
    gap: 1px;
    height: 16px;
}

.edit {
    width: 58px;
    margin-left: 6px;
}

.edit button {
    gap: 2px;
}

.chev.far {
    margin-left: 2px;
}

.rows {
    display: flex;
    flex-direction: column;
    gap: 6px;
    padding-top: 6px;
}

.group .rows.body {
    padding-left: 4px;
}

.row {
    display: flex;
    align-items: center;
    gap: 1px;
    height: 15px;
}

.tool {
    width: 14px;
    height: 15px;
}

.tool.wide {
    width: 17px;
}

.tool.on {
    border: 1px solid #999;
    background: #cfcdcb;
}

.tool.orient {
    margin-left: 4px;
}

.tool b,
.tool em,
.tool u {
    font-size: 9px;
}

.glyph {
    font-size: 11px;
}

.glyph.small {
    font-size: 9px;
}

.font-color {
    border-bottom: 2px solid #fff;
    font-size: 9px;
}

.sep {
    width: 1px;
    height: 13px;
    margin: 0 1px 0 3px;
    background: #d0cecc;
}

.sep.snug {
    margin: 0 1px;
}

.tall-sep {
    width: 1px;
    margin: 5px 4px 5px 2px;
    background: #d0cecc;
}

.g-align .body {
    padding-left: 5px;
}

.g-align .row {
    gap: 2px;
}

.g-align .text-tool {
    justify-content: flex-start;
    gap: 1px;
}

.combo {
    display: flex;
    align-items: center;
    height: 14px;
    border: 1px solid #d0cecc;
    background: #fff;
}

.combo select {
    flex: 1;
    min-width: 0;
    height: 12px;
    padding-left: 1px;
    appearance: none;
}

.combo .chev {
    width: 8px;
}

.c-font { width: 76px; }
.c-size { width: 33px; }
.c-number { width: 92px; }

.collapse {
    flex: 1;
    align-items: flex-end;
    justify-content: flex-end;
    padding: 0 3px 4px 0;
}

/* formula bar */
.formula-bar {
    display: flex;
    align-items: flex-start;
    flex: none;
    height: 41px;
    padding-top: 5px;
}

.name-box {
    display: flex;
    align-items: center;
    width: 77px;
    height: 16px;
    padding: 0 4px;
    border: 1px solid #d0d0d0;
    background: #fff;
}

.name-box input {
    flex: 1;
    min-width: 0;
}

.dots {
    width: 1px;
    height: 8px;
    margin: 4px 10px 0 9px;
    border-left: 1px dotted #888;
}

.fx {
    display: flex;
    align-items: center;
    justify-content: space-around;
    width: 72px;
    height: 16px;
    border: 1px solid #d0d0d0;
    background: #fff;
}

.fn {
    font-family: "Liberation Serif", serif;
    font-size: 12px;
}

.fn small {
    font-size: 9px;
}

.formula {
    display: flex;
    align-items: flex-start;
    flex: 1;
    height: 29px;
    margin: 0 1px 0 2px;
    border: 1px solid #d0d0d0;
    background: #fff;
}

.formula input {
    flex: 1;
    min-width: 0;
    height: 14px;
    padding-left: 3px;
}

.formula button {
    height: 15px;
}

/* spreadsheet */
.work {
    display: flex;
    flex: 1;
    min-height: 0;
}

.sheet {
    position: relative;
    flex: 1;
    min-width: 0;
    overflow: hidden;
    border-right: 1px solid #ababab;
    background: #fff;
    color: #1a1a1a;
    font-family: Lato, "Open Sans", sans-serif;
}

table {
    width: 100%;
    border-spacing: 0;
    table-layout: fixed;
}

.k-head { width: 16px; }
.k-a { width: 70px; }
.k-b { width: 19px; }
.k-c { width: 164px; }
.k-f { width: 96px; }
.k-g { width: 58px; }
.k-h { width: 128px; }
.k-i { width: 88px; }
.k-j { width: 93px; }
.k-k { width: 122px; }
.k-l { width: 62px; }
.k-m { width: 74px; }

th,
td {
    height: 12px;
    padding: 0 0 0 1px;
    overflow: hidden;
    line-height: 11px;
    white-space: nowrap;
    text-align: left;
    vertical-align: bottom;
}

th {
    padding: 0;
    border: solid #bdbdbd;
    border-width: 0 1px 1px 0;
    background: #e6e6e6;
    color: #333;
    font-weight: 400;
    font-size: 9px;
    text-align: center;
}

/* rows alternate so that five of them make 63px */
tbody tr:nth-child(5n) > *,
tbody tr:nth-child(5n + 1) > *,
tbody tr:nth-child(5n + 3) > * {
    height: 13px;
}

th.after {
    border-left: 1px solid #bdbdbd;
}

.corner svg {
    margin: 1px 1px 1px auto;
}

.strong,
.gray,
.silver {
    font-size: 9px;
    line-height: 12px;
}

.strong {
    overflow: visible;
    font-weight: 700;
}

.gray {
    background: #a6a6a6;
}

.silver {
    padding-right: 3px;
    background: #bfbfbf;
    text-align: right;
}

tbody tr.fields > * {
    height: 21px;
}

tbody tr.fields > th {
    line-height: 13px;
}

.field,
.vins {
    border: solid #111;
    border-width: 1px 1px 1px 0;
    background: #305496;
    color: #fff;
    font-weight: 700;
    font-size: 9px;
    line-height: 13px;
}

.vins {
    background: #a9d08e;
    color: #000;
    font-size: 14px;
    line-height: 19px;
    text-align: center;
}

.before {
    border-right: 1px solid #111;
}

.data td {
    border: solid #cfcfcf;
    border-width: 0 1px 1px 0;
}

.data .blank {
    border-bottom: 0;
}

.data .num {
    padding: 0;
    border-right-color: #111;
    background: #f2f2f2;
    text-align: center;
}

.data .vin {
    border-right-color: #111;
    text-align: center;
}

.data .bad {
    background: #ffc7ce;
    color: #b0202a;
    font-size: 9px;
}

.card {
    position: absolute;
    top: 16px;
    left: 75px;
    width: 183px;
    padding: 10px 12px 5px;
    border: 1px solid #41719c;
    border-radius: 22px;
    background: #bdd7ee;
    color: #111;
    font-size: 9px;
}

.card h2 {
    margin: 0;
    font-size: 15px;
    line-height: 18px;
}

.card p {
    margin: 0;
    line-height: 12px;
    white-space: nowrap;
}

.card button {
    border: 1px solid #fff;
    border-right-color: #888;
    border-bottom-color: #888;
    background: #f0f0f0;
    box-shadow: 1px 1px 0 #aaa;
}

.card .get {
    width: 78px;
    height: 23px;
    margin: 6px 0 6px 67px;
}

.clear-row {
    display: flex;
    justify-content: space-between;
    padding-right: 20px;
}

.clear-row .clear {
    width: 64px;
    height: 21px;
    margin-top: 4px;
}

.vscroll {
    display: flex;
    flex-direction: column;
    flex: none;
    width: 11px;
    padding: 1px 0 0 1px;
    background: #d9d9d9;
}

.vscroll button {
    height: 10px;
    border: 1px solid #bbb;
    background: #fff;
}

.vscroll .thumb {
    flex: 0 0 23%;
    border: 1px solid #bbb;
    background: #fff;
}

.vscroll .end {
    margin-top: auto;
}

/* sheet tabs */
.sheet-tabs {
    display: flex;
    flex: none;
    height: 15px;
    border-top: 1px solid #c6c6c6;
    font-size: 9px;
}

.sheets {
    display: flex;
    align-items: center;
    flex: 0 0 59%;
    padding-left: 7px;
}

.arrow {
    width: 15px;
}

.sheet-tab {
    align-self: flex-start;
    height: 12px;
    padding: 0 6px 2px;
    border-right: 1px solid #aaa;
}

.sheet-tab.current {
    height: 13px;
    margin-left: 15px;
    border-right: 0;
    border-bottom: 1px solid #217346;
    background: #fff;
    color: #217346;
    font-weight: 700;
}

.add {
    margin-left: 16px;
}

.sheet-tabs .dots {
    margin: 3px 8px 0 9px;
}

.hscroll {
    display: flex;
    flex: 1;
    height: 11px;
    margin: 1px 11px 0 0;
    background: #d9d9d9;
}

.hscroll button {
    width: 10px;
    border: 1px solid #bbb;
    background: #fff;
}

.hscroll .end {
    margin-left: auto;
}

.hscroll .thumb {
    flex: 0 0 75%;
    border: 1px solid #bbb;
    background: #fff;
}

/* status bar */
.status {
    display: flex;
    align-items: center;
    flex: none;
    height: 12px;
    padding: 0 4px 0 3px;
    background: #f3f2f1;
    font-size: 7px;
}

.view {
    width: 26px;
    height: 12px;
}

.view.on {
    background: #d0d0d0;
}

.step {
    width: 10px;
}

.status input {
    width: 68px;
    height: 10px;
    margin: 0 1px;
    appearance: none;
    background: linear-gradient(#aaa, #aaa) center / 100% 1px no-repeat;
}

.status input::-webkit-slider-thumb {
    appearance: none;
    width: 3px;
    height: 8px;
    background: #555;
}

.percent {
    margin-left: 5px;
}
</style>
